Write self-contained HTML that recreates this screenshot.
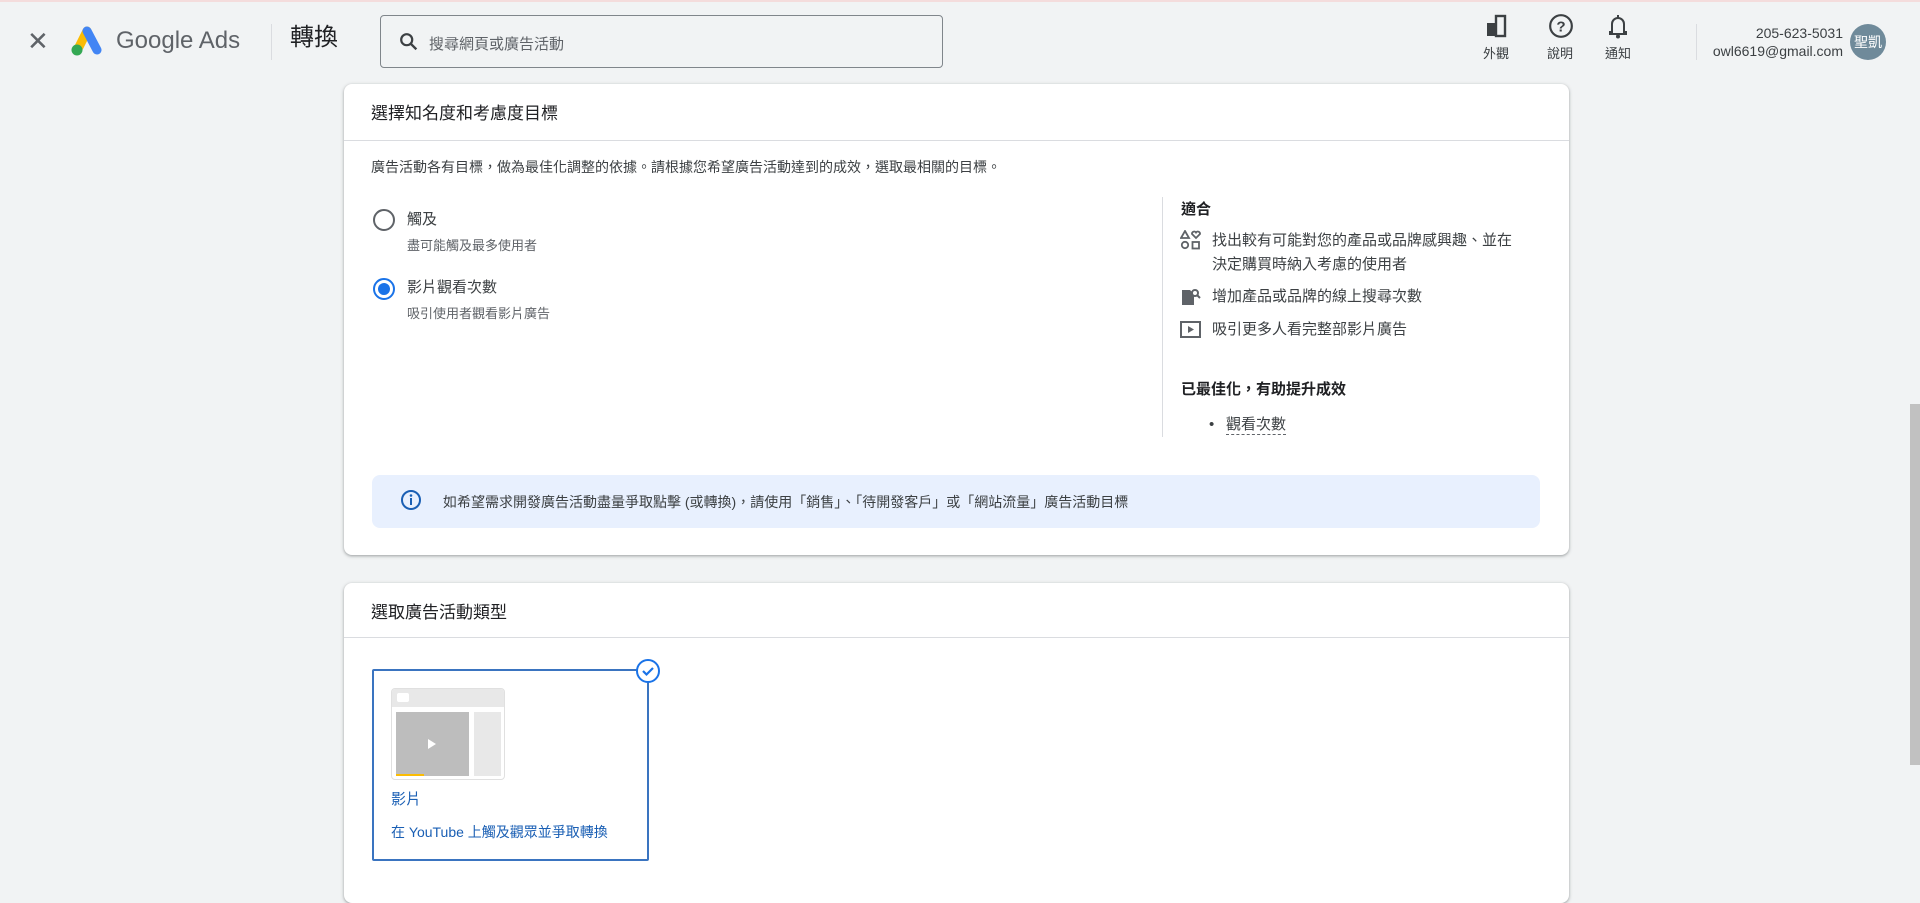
<!DOCTYPE html>
<html><head><meta charset="utf-8"><style>
*{box-sizing:border-box;margin:0;padding:0}
body{width:1920px;height:869px;overflow:hidden;background:#f1f3f4;font-family:"Liberation Sans","Noto Sans CJK TC",sans-serif;color:#3c4043;position:relative}
.a{position:absolute;white-space:nowrap}
.card{position:absolute;background:#fff;border-radius:8px;box-shadow:0 1px 2px rgba(60,64,67,.3),0 1px 3px 1px rgba(60,64,67,.15)}
.t{font-size:17px;color:#202124}
.s{font-size:13px;color:#5f6368}
.b{font-size:15px;color:#3c4043}
</style></head><body>
<div class="a" style="left:0;top:0;width:1920px;height:2px;background:#f4dcdc"></div>
<div class="a" style="left:27px;top:28px;font-size:26px;color:#5f6368;line-height:26px">✕</div>
<svg class="a" style="left:67px;top:25px" width="38" height="32" viewBox="0 0 38 32"><line x1="20" y1="6" x2="12" y2="22" stroke="#fbbc04" stroke-width="9" stroke-linecap="round"/><line x1="20" y1="6" x2="30" y2="25" stroke="#4285f4" stroke-width="9" stroke-linecap="round"/><circle cx="10" cy="25" r="5.5" fill="#34a853"/></svg>
<div class="a" style="left:116px;top:27px;font-size:24px;color:#5f6368">Google Ads</div>
<div class="a" style="left:271px;top:24px;width:1px;height:36px;background:#dadce0"></div>
<div class="a" style="left:290px;top:24px;font-size:24px;line-height:28px;color:#202124">轉換</div>
<div class="a" style="left:380px;top:15px;width:563px;height:53px;border:1px solid #80868b;border-radius:4px"></div>
<svg class="a" style="left:398px;top:31px" width="22" height="22" viewBox="0 0 24 24"><circle cx="9.5" cy="9.5" r="6" fill="none" stroke="#3c4043" stroke-width="2.4"/><line x1="14" y1="14" x2="20" y2="20" stroke="#3c4043" stroke-width="2.6"/></svg>
<div class="a" style="left:429px;top:33px;font-size:15px;color:#5f6368">搜尋網頁或廣告活動</div>
<svg class="a" style="left:1486px;top:14px" width="22" height="24" viewBox="0 0 22 24"><rect x="1" y="9" width="9" height="13" fill="#3c4043"/><rect x="10" y="2" width="9" height="20" fill="none" stroke="#3c4043" stroke-width="2.4"/></svg>
<svg class="a" style="left:1548px;top:13px" width="26" height="26" viewBox="0 0 24 24"><circle cx="12" cy="12" r="10" fill="none" stroke="#3c4043" stroke-width="2"/><text x="12" y="17" font-size="14" font-weight="bold" text-anchor="middle" fill="#3c4043" font-family="Liberation Sans">?</text></svg>
<svg class="a" style="left:1607px;top:13px" width="22" height="26" viewBox="0 0 22 26"><path d="M5 19V11a6 6 0 0 1 12 0v8h2v2H3v-2z" fill="none" stroke="#3c4043" stroke-width="2"/><circle cx="11" cy="23.5" r="2" fill="#3c4043"/><rect x="10" y="2" width="2" height="3" fill="#3c4043"/></svg>
<div class="a s" style="left:1483px;top:43px;color:#3c4043">外觀</div>
<div class="a s" style="left:1547px;top:43px;color:#3c4043">說明</div>
<div class="a s" style="left:1605px;top:43px;color:#3c4043">通知</div>
<div class="a" style="left:1696px;top:24px;width:1px;height:36px;background:#dadce0"></div>
<div class="a" style="right:77px;top:24px;font-size:14px;color:#3c4043;text-align:right;line-height:18px">205-623-5031<br>owl6619@gmail.com</div>
<div class="a" style="left:1850px;top:24px;width:36px;height:36px;border-radius:50%;background:#6f8a9a;color:#fff;font-size:14px;text-align:center;line-height:36px">聖凱</div>
<div class="a" style="left:1910px;top:404px;width:10px;height:361px;background:#c1c1c1"></div>

<div class="card" style="left:344px;top:84px;width:1225px;height:471px">
 <div class="a t" style="left:27px;top:15px">選擇知名度和考慮度目標</div>
 <div class="a" style="left:0;top:56px;width:1225px;height:1px;background:#dadce0"></div>
 <div class="a b" style="left:27px;top:73px;font-size:14px">廣告活動各有目標，做為最佳化調整的依據。請根據您希望廣告活動達到的成效，選取最相關的目標。</div>
 <div class="a" style="left:29px;top:125px;width:22px;height:22px;border:2px solid #5f6368;border-radius:50%"></div>
 <div class="a b" style="left:63px;top:124px">觸及</div>
 <div class="a s" style="left:63px;top:151px">盡可能觸及最多使用者</div>
 <div class="a" style="left:29px;top:194px;width:22px;height:22px;border:2px solid #1a73e8;border-radius:50%"><div style="margin:3px;width:12px;height:12px;border-radius:50%;background:#1a73e8"></div></div>
 <div class="a b" style="left:63px;top:192px">影片觀看次數</div>
 <div class="a s" style="left:63px;top:219px">吸引使用者觀看影片廣告</div>
 <div class="a" style="left:818px;top:113px;width:1px;height:240px;background:#dadce0"></div>
 <div class="a" style="left:837px;top:114px;font-size:15px;font-weight:bold;color:#202124">適合</div>
 <svg class="a" style="left:836px;top:146px" width="22" height="20" viewBox="0 0 22 20"><path d="M5 1L9 8H1z" fill="none" stroke="#5f6368" stroke-width="1.8"/><path d="M16 8l-4-4a2.2 2.2 0 0 1 4-1.5 2.2 2.2 0 0 1 4 1.5z" fill="none" stroke="#5f6368" stroke-width="1.8"/><circle cx="5" cy="15" r="3.2" fill="none" stroke="#5f6368" stroke-width="1.8"/><rect x="12.5" y="12" width="6.5" height="6.5" fill="none" stroke="#5f6368" stroke-width="1.8"/></svg>
 <div class="a b" style="left:868px;top:145px;line-height:24px">找出較有可能對您的產品或品牌感興趣、並在<br>決定購買時納入考慮的使用者</div>
 <svg class="a" style="left:836px;top:203px" width="22" height="20" viewBox="0 0 22 20"><path d="M2 3h8l4 4v11H2z" fill="#5f6368"/><circle cx="15" cy="6" r="3" fill="#fff" stroke="#5f6368" stroke-width="2"/><line x1="17" y1="8" x2="20" y2="11" stroke="#5f6368" stroke-width="2"/></svg>
 <div class="a b" style="left:868px;top:201px">增加產品或品牌的線上搜尋次數</div>
 <svg class="a" style="left:836px;top:237px" width="22" height="18" viewBox="0 0 22 18"><rect x="1" y="1" width="19" height="15" fill="none" stroke="#5f6368" stroke-width="2"/><path d="M8 5l6 3.5-6 3.5z" fill="#5f6368"/></svg>
 <div class="a b" style="left:868px;top:234px">吸引更多人看完整部影片廣告</div>
 <div class="a" style="left:837px;top:294px;font-size:15px;font-weight:bold;color:#202124">已最佳化，有助提升成效</div>
 <div class="a b" style="left:865px;top:332px">•</div>
 <div class="a b" style="left:882px;top:332px;border-bottom:1px dashed #5f6368;line-height:18px">觀看次數</div>
 <div class="a" style="left:28px;top:391px;width:1168px;height:53px;background:#e8f0fe;border-radius:8px"></div>
 <svg class="a" style="left:56px;top:405px" width="22" height="22" viewBox="0 0 22 22"><circle cx="11" cy="11" r="9" fill="none" stroke="#1a5fb4" stroke-width="2"/><rect x="10" y="9" width="2" height="7" fill="#1a5fb4"/><circle cx="11" cy="6.5" r="1.3" fill="#1a5fb4"/></svg>
 <div class="a" style="left:99px;top:408px;font-size:14px;color:#3c4043">如希望需求開發廣告活動盡量爭取點擊 (或轉換)，請使用「銷售」、「待開發客戶」或「網站流量」廣告活動目標</div>
</div>

<div class="card" style="left:344px;top:583px;width:1225px;height:320px">
 <div class="a t" style="left:27px;top:15px">選取廣告活動類型</div>
 <div class="a" style="left:0;top:54px;width:1225px;height:1px;background:#dadce0"></div>
 <div class="a" style="left:28px;top:86px;width:277px;height:192px;border:2px solid #3a74c0;border-radius:2px"></div>
 <div class="a" style="left:292px;top:76px;width:24px;height:24px;border-radius:50%;background:#fff;border:2px solid #1a73e8"><svg width="20" height="20" viewBox="0 0 20 20" style="display:block"><path d="M5 10l3.5 3.5L15 7" fill="none" stroke="#1a73e8" stroke-width="2.2"/></svg></div>
 <div class="a" style="left:47px;top:105px;width:114px;height:92px;background:#fff;border:1px solid #e0e0e0;border-radius:4px;overflow:hidden">
  <div style="position:absolute;left:0;top:0;width:114px;height:18px;background:#e8e8e8"></div>
  <div style="position:absolute;left:5px;top:4px;width:12px;height:9px;background:#fff;border-radius:2px"></div>
  <div style="position:absolute;left:4px;top:23px;width:73px;height:64px;background:#bdbdbd"></div>
  <div style="position:absolute;left:36px;top:50px;width:0;height:0;border-left:8px solid #fff;border-top:5px solid transparent;border-bottom:5px solid transparent"></div>
  <div style="position:absolute;left:4px;top:85px;width:28px;height:2px;background:#fbbc04"></div>
  <div style="position:absolute;left:82px;top:23px;width:27px;height:64px;background:#e8e8e8"></div>
 </div>
 <div class="a" style="left:47px;top:205px;font-size:15px;color:#1a5fb4">影片</div>
 <div class="a" style="left:47px;top:239px;font-size:14px;color:#1a5fb4">在 YouTube 上觸及觀眾並爭取轉換</div>
</div>
</body></html>
